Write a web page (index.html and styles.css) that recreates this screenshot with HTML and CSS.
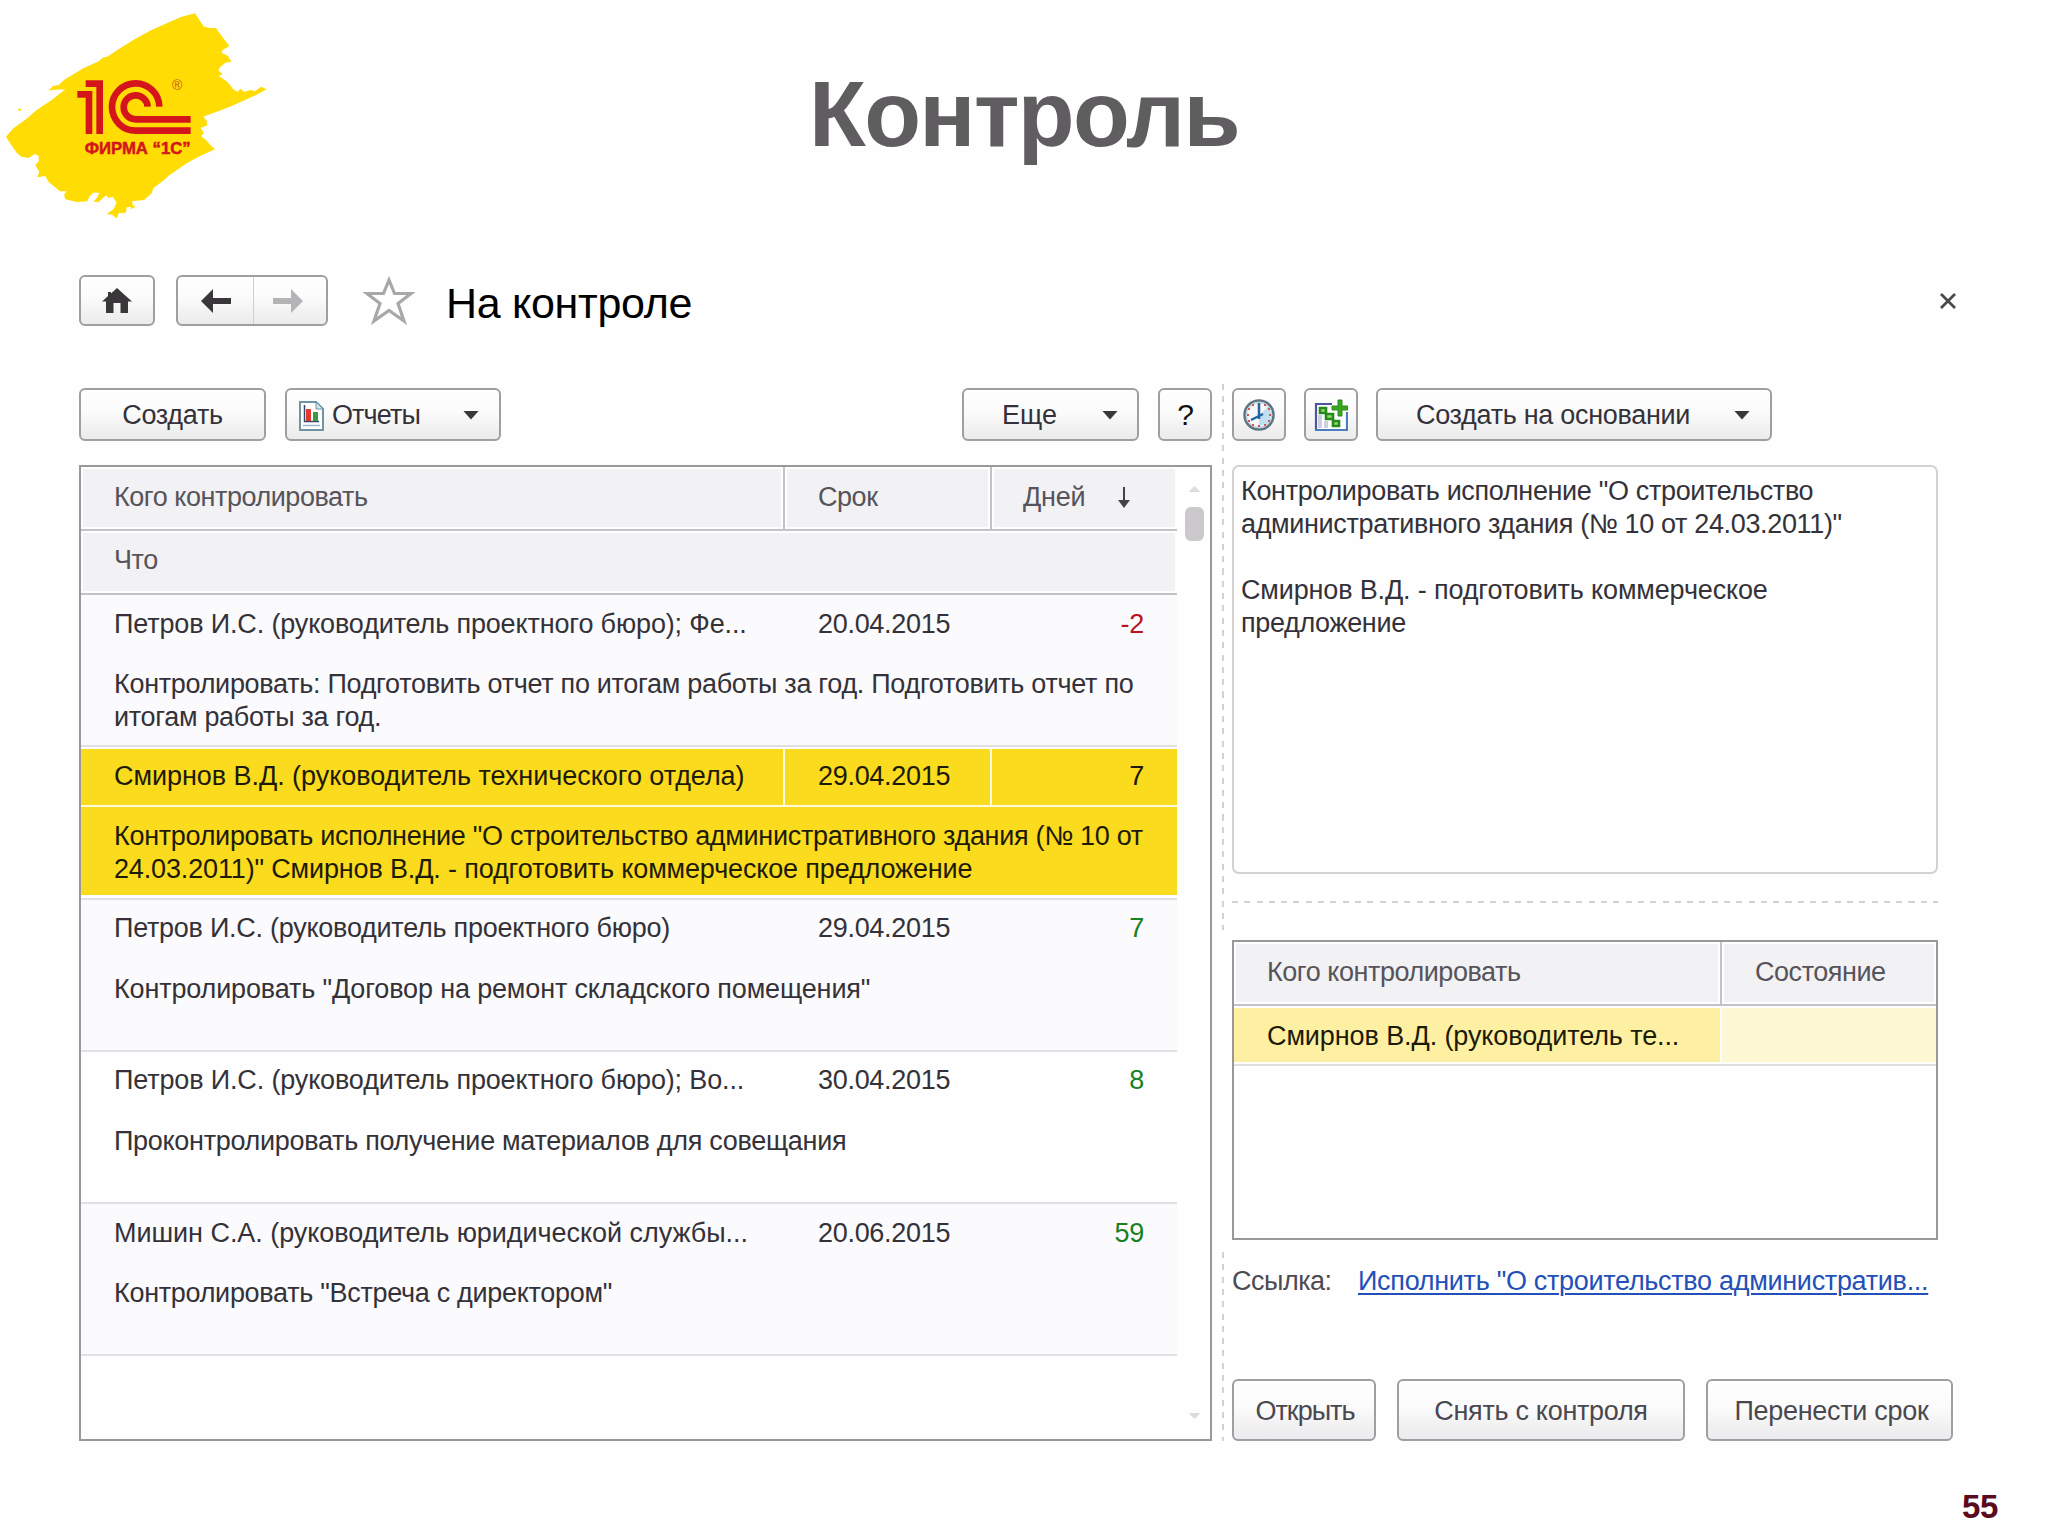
FILE: index.html
```html
<!DOCTYPE html>
<html lang="ru">
<head>
<meta charset="utf-8">
<title>Контроль</title>
<link rel="stylesheet" href="styles.css">
</head>
<body>
<div class="slide">
  <header class="slide-head">
    <svg class="logo" viewBox="0 0 870 690" role="img" aria-label="Фирма 1С">
      <path fill="#ffdd04" d="M18 410 40 385 78 358 110 330 155 300 196 268 150 270 158 258 176 255 192 240 205 232 250 205 296 184 310 172 322 170 352 150 400 120 450 92 500 70 545 50 585 40 598 60 612 80 630 84 648 84 662 104 676 122 688 138 668 150 665 158 684 168 694 185 676 188 660 202 655 212 668 222 656 228 678 242 690 254 698 266 712 276 722 266 732 276 752 270 764 274 784 260 800 268 770 284 740 298 690 320 610 350 620 362 622 376 602 384 612 400 603 408 618 420 632 436 645 448 600 468 560 490 505 528 490 542 460 564 455 580 432 600 396 604 400 620 380 622 378 638 356 640 350 655 336 644 320 642 340 628 350 608 338 590 326 594 318 586 296 606 280 606 292 592 298 578 280 578 268 590 262 604 230 606 196 598 192 584 200 574 180 574 145 545 136 528 112 532 118 516 106 496 116 484 116 468 104 462 86 474 64 470 50 458 34 436Z"/>
      <path fill="#ffdd04" d="M55 326h8v6h-8zM148 268l12-6 4 6-14 4zM392 622l14-6-2 6-12 6z"/>
      <g fill="none" stroke="#d4161c" stroke-width="20">
        <path d="M232 283h35v119M257 251h42v151"/>
        <path d="M478 320A71 71 0 1 0 407 392H572"/>
        <path d="M443 320A36 36 0 1 0 407 358H572"/>
      </g>
      <text class="logo-name" x="254" y="463" textLength="318" lengthAdjust="spacingAndGlyphs">ФИРМА “1С”</text>
      <text class="logo-reg" x="516" y="270">®</text>
    </svg>
    <h1 class="slide-title">Контроль</h1>
  </header>

  <nav class="app-head">
    <button class="btn home">
      <svg width="32" height="28" viewBox="0 0 32 28"><path fill="#39373a" d="M16 1 31 14.500H27V26H19.500V16H12.500V26H5V14.500H1L7 9V5H10V6.500Z"/></svg>
    </button>
    <div class="btn history">
      <span class="step"><svg width="30" height="24" viewBox="0 0 30 24"><path fill="#39373a" d="M0 12 12 0V9H30V15H12V24Z"/></svg></span>
      <span class="step next"><svg width="30" height="24" viewBox="0 0 30 24"><path fill="#b5b3b6" d="M30 12 18 0V9H0V15H18V24Z"/></svg></span>
    </div>
    <svg class="star" width="52" height="50" viewBox="0 0 52 50"><path fill="#fff" stroke="#a9a7aa" stroke-width="3.200" d="M26 5 31.500 18.500 48 18.500 35 28.500 41 46 26 35.500 11 46 17 28.500 4 18.500 20.500 18.500Z"/></svg>
    <h2 class="app-title">На контроле</h2>
    <svg class="close" width="16" height="16" viewBox="0 0 16 16"><path stroke="#4b494c" stroke-width="2.800" d="M1 1 15 15M15 1 1 15"/></svg>
  </nav>

  <main class="work">
    <section class="left">
      <div class="toolbar">
        <button class="btn create">Создать</button>
        <button class="btn reports">
          <svg width="25" height="30" viewBox="0 0 25 30"><path fill="#fff" stroke="#6d94a3" stroke-width="2" d="M1 1H17L24 8V29H1Z"/><path fill="#d5e4ea" stroke="#6d94a3" d="M17 1V8H24Z"/><path stroke="#39476b" stroke-width="1.500" fill="none" d="M5.500 4V20.500H20"/><path fill="#e23a2c" d="M7 8h5v12H7z"/><path fill="#3b9a3f" d="M14 11h5v9h-5z"/><path stroke="#9fb9cc" stroke-width="1.500" d="M4 24.500H21"/></svg>
          <span class="label">Отчеты</span><i class="caret"></i>
        </button>
        <button class="btn more"><span class="label">Еще</span><i class="caret"></i></button>
        <button class="btn help">?</button>
      </div>
      <div class="list">
        <div class="rows">
          <div class="cols head"><span>Кого контролировать</span><span>Срок</span><span class="days">Дней<svg width="12" height="21" viewBox="0 0 12 21"><path fill="#454347" d="M5 0H7V13H12L6 21 0 13H5Z"/></svg></span></div>
          <div class="head what"><span>Что</span></div>
          <article class="item odd">
            <div class="cols"><span class="who">Петров И.С. (руководитель проектного бюро); Фе...</span><span>20.04.2015</span><span class="num late">-2</span></div>
            <p class="note">Контролировать: Подготовить отчет по итогам работы за год. Подготовить отчет по<br>итогам работы за год.</p>
          </article>
          <article class="item current">
            <div class="cols"><span class="who wide">Смирнов В.Д. (руководитель технического отдела)</span><span>29.04.2015</span><span class="num">7</span></div>
            <p class="note">Контролировать исполнение "О строительство административного здания (№ 10 от<br><span class="who">24.03.2011)" Смирнов В.Д. - подготовить коммерческое предложение</span></p>
          </article>
          <article class="item odd">
            <div class="cols"><span class="who tight">Петров И.С. (руководитель проектного бюро)</span><span>29.04.2015</span><span class="num ok">7</span></div>
            <p class="note"><span class="who">Контролировать "Договор на ремонт складского помещения"</span></p>
          </article>
          <article class="item">
            <div class="cols"><span class="who">Петров И.С. (руководитель проектного бюро); Во...</span><span>30.04.2015</span><span class="num ok">8</span></div>
            <p class="note">Проконтролировать получение материалов для совещания</p>
          </article>
          <article class="item odd">
            <div class="cols"><span class="who wide">Мишин С.А. (руководитель юридической службы...</span><span>20.06.2015</span><span class="num ok">59</span></div>
            <p class="note">Контролировать "Встреча с директором"</p>
          </article>
        </div>
        <div class="scroll"><i class="up"></i><i class="thumb"></i><i class="down"></i></div>
      </div>
    </section>

    <div class="splitter"><i class="dash-a"></i><i class="dash-b"></i></div>

    <section class="right">
      <div class="toolbar">
        <button class="btn square"><svg width="34" height="34" viewBox="0 0 34 34"><circle cx="17" cy="17" r="14.500" fill="#f4f8fb" stroke="#5d7583" stroke-width="2.500"/><circle cx="17" cy="17" r="12.500" fill="none" stroke="#c3d3dc" stroke-width="1.500"/><path fill="#bfe0f3" d="M17 17 26 9A12 12 0 0 1 24 26L17 28Z"/><g fill="#d2584f"><path d="M10 6h2v2h-2zM22 6h2v2h-2zM6 10h2v2H6zM26 10h2v2h-2zM5 16h2v2H5zM27 16h2v2h-2zM6 22h2v2H6zM26 22h2v2h-2zM10 26h2v2h-2zM22 26h2v2h-2zM16 27h2v2h-2z"/></g><path fill="none" stroke="#24649c" stroke-width="2.500" d="M17 5V21M21 16 9 22"/></svg></button>
        <button class="btn square"><svg width="34" height="34" viewBox="0 0 34 34"><path fill="#fff" d="M2 6H33V32H2Z"/><path fill="#cfd0de" d="M4 17h4v13H4zM10 23h4v7h-4z"/><path fill="none" stroke="#4b55a0" stroke-width="2.200" d="M18 6H2V32"/><path fill="none" stroke="#4a7cc0" stroke-width="2.200" d="M1 32H33V14"/><path fill="#8fdc6a" stroke="#248a1c" stroke-width="2.600" d="M6 10h6v5H6zM12 16h7v5h-7zM19 23h6v5h-6z"/><path fill="#3aa51f" stroke="#2b8f18" d="M24 2h4v6h6v4h-6v6h-4v-6h-6V8h6Z"/></svg></button>
        <button class="btn based"><span class="label">Создать на основании</span><i class="caret"></i></button>
      </div>
      <div class="detail"><span class="who tight">Контролировать исполнение "О строительство</span><br>административного здания (№ 10 от 24.03.2011)"<br><br><span class="who">Смирнов В.Д. - подготовить коммерческое</span><br>предложение</div>
      <div class="hsplit"></div>
      <div class="people">
        <div class="pair head"><span>Кого контролировать</span><span>Состояние</span></div>
        <div class="pair picked"><span>Смирнов В.Д. (руководитель те...</span><span></span></div>
      </div>
      <div class="ref"><span>Ссылка:</span><a>Исполнить "О строительство административ...</a></div>
      <div class="actions">
        <button class="btn open">Открыть</button>
        <button class="btn release">Снять с контроля</button>
        <button class="btn move">Перенести срок</button>
      </div>
    </section>
  </main>
  <footer class="page-no">55</footer>
</div>
</body>
</html>
```
FILE: styles.css
```css
* { box-sizing: border-box; }
body { margin: 0; background: #fefefe; font-family: "Liberation Sans", Arial, sans-serif; font-size: 27px; line-height: 33px; color: #343238; letter-spacing: -0.3px; }
h1, h2, p { margin: 0; font-weight: normal; }
.slide { width: 2048px; height: 1536px; overflow: hidden; display: flex; flex-direction: column; }

.slide-head { display: grid; grid-template-columns: 290px 1fr 290px; height: 275px; }
.logo { width: 290px; height: 230px; }
.logo-name { font-size: 50px; font-weight: bold; fill: #d4161c; letter-spacing: 0; stroke: #d4161c; stroke-width: 1.5px; }
.logo-reg { font-size: 42px; fill: #c8541c; }
.slide-title { text-align: center; font-size: 93px; font-weight: bold; line-height: 120px; letter-spacing: -1.6px; padding-top: 54px; color: #5f5d5f; }

.btn { display: flex; align-items: center; justify-content: center; height: 53px; padding: 2px 0 0; border: 2px solid #a09ea1; border-radius: 6px; background: linear-gradient(#fff, #fbfbfb 45%, #ebeaec); font: inherit; letter-spacing: inherit; color: inherit; white-space: nowrap; }
.label { text-align: left; }
.caret { width: 16px; height: 9px; margin-top: -1px; background: #39373a; clip-path: polygon(0 0, 100% 0, 50% 100%); }

.app-head { display: flex; height: 113px; padding-left: 79px; align-items: flex-start; }
.home { width: 76px; height: 51px; margin-right: 21px; padding: 0; }
.history { width: 152px; height: 51px; padding: 0; }
.step { width: 75px; height: 100%; display: flex; align-items: center; justify-content: center; }
.next { width: 73px; border-left: 1px solid #d0ced1; padding-right: 5px; }
.star { margin: 0 0 0 35px; }
.app-title { margin: 3px 0 0 31px; font-size: 43px; line-height: 50px; letter-spacing: -0.3px; color: #000; }
.close { margin: 18px 92px 0 auto; }

.work { display: grid; grid-template-columns: 1133px 20px 1fr; padding-left: 79px; height: 1053px; }
.toolbar { display: flex; height: 77px; align-items: flex-start; }
.create { width: 187px; margin-right: 19px; }
.reports { width: 216px; justify-content: flex-start; padding-left: 12px; }
.reports .label { margin-left: 8px; width: 131px; letter-spacing: -0.9px; }
.more { width: 177px; margin-left: auto; margin-right: 19px; justify-content: flex-start; padding-left: 38px; }
.more .label { width: 100px; letter-spacing: 0; }
.help { width: 54px; padding: 0 0 0 1px; font-size: 30px; color: #111; }

.list { height: 976px; border: 2px solid #9a989b; display: flex; background: #fefefe; }
.rows { width: 1096px; }
.cols { display: grid; grid-template-columns: 702px 207px 1fr; height: 58px; align-items: center; white-space: nowrap; }
.cols > span { padding-left: 33px; }
.cols > span + span { padding-left: 35px; }
.head { background: #f2f1f3; color: #56545b; letter-spacing: -0.45px; }
.cols.head { height: 64px; border-bottom: 2px solid #c4c2c6; align-items: stretch; }
.cols.head > span { box-shadow: inset 0 0 0 2px #fefefe; line-height: 60px; }
.cols.head > span + span { border-left: 2px solid #c4c2c6; padding-left: 33px; }
.what { height: 64px; border-bottom: 2px solid #c4c2c6; line-height: 59px; }
.what span { display: block; height: 62px; padding-left: 33px; box-shadow: inset 0 0 0 2px #fefefe; }
.cols.head > .days { display: flex; align-items: center; gap: 32px; padding: 0 0 2px 31px; letter-spacing: -0.2px; }
.item { height: 152.3px; border-bottom: 2px solid #e0dfe3; }
.odd { background: #fbfafc; }
.note { padding: 15px 0 0 33px; white-space: nowrap; }
.who { letter-spacing: -0.15px; }
.who.wide { letter-spacing: -0.05px; }
.who.tight { letter-spacing: -0.34px; }
.cols .who.tight { letter-spacing: -0.26px; }
.cols > .num, .cols > span + .num { text-align: right; padding: 0 33px 0 0; }
.late { color: #b8131f; }
.ok { color: #178124; }
.current { padding: 2px 0; color: #1d1a08; }
.current .cols { height: 58px; background: #fadb1e; border-bottom: 2px solid #fffbe0; align-items: stretch; line-height: 54px; }
.current .cols > span + span { border-left: 2px solid #fffbe0; padding-left: 33px; }
.current .cols > span + .num { padding-left: 0; }
.current .note { height: 88px; padding-top: 13px; background: #fadb1e; }
.scroll { flex: 1; display: flex; flex-direction: column; align-items: center; padding: 19px 0 20px 2px; }
.up, .down { width: 12px; height: 6px; background: #dddbde; }
.up { clip-path: polygon(50% 0, 100% 100%, 0 100%); }
.down { margin-top: auto; clip-path: polygon(0 0, 100% 0, 50% 100%); }
.thumb { width: 19px; height: 34px; margin-top: 15px; border-radius: 6px; background: #cbc9cc; }

.splitter { display: flex; flex-direction: column; align-items: center; margin-top: -4px; padding-left: 1px; }
.splitter i { width: 2px; background: repeating-linear-gradient(#d3d1d4 0 6px, transparent 6px 12.3px); }
.dash-a { height: 546px; margin-bottom: 322px; }
.dash-b { height: 189px; }

.square { width: 54px; margin-right: 18px; padding: 0; }
.based { width: 396px; justify-content: flex-start; padding-left: 38px; }
.based .label { width: 318px; }
.detail { width: 706px; height: 409px; padding: 8px 0 0 7px; border: 2px solid #d3d1d4; border-radius: 7px; white-space: nowrap; }
.detail { letter-spacing: -0.35px; }
.hsplit { width: 706px; height: 2px; margin: 27px 0 37px; background: repeating-linear-gradient(90deg, #d3d1d4 0 6px, transparent 6px 12.3px); }
.people { width: 706px; height: 300px; border: 2px solid #9a989b; }
.pair { display: grid; grid-template-columns: 486px 1fr; white-space: nowrap; }
.pair.head { height: 64px; line-height: 61px; border-bottom: 2px solid #c4c2c6; }
.pair.head span { height: 62px; padding-left: 33px; box-shadow: inset 0 0 0 2px #fefefe; }
.pair.head span + span { border-left: 2px solid #c4c2c6; }
.picked { height: 60px; padding: 2px 0; line-height: 57px; border-bottom: 2px solid #e0dfe3; color: #1d1a08; letter-spacing: -0.1px; }
.picked span { height: 54px; padding-left: 33px; background: #fdf0a2; }
.picked span + span { border-left: 2px solid #fefefe; background: #fdf8d3; }
.ref { display: flex; height: 139px; padding-top: 25px; color: #4d4b52; white-space: nowrap; }
.ref span { width: 126px; letter-spacing: -0.5px; }
.ref a { color: #2350b8; text-decoration: underline; text-decoration-thickness: 2px; text-underline-offset: 3px; }
.actions { display: flex; color: #4a484f; }
.actions .btn { height: 62px; padding-top: 3px; }
.actions .open { width: 144px; margin-right: 21px; padding-left: 2px; letter-spacing: -1px; }
.release { width: 288px; margin-right: 21px; }
.actions .move { width: 247px; padding-left: 4px; }
.page-no { align-self: flex-end; padding: 48px 50px 0 0; font-size: 33px; line-height: 36px; font-weight: bold; color: #5c0a1e; }
```
